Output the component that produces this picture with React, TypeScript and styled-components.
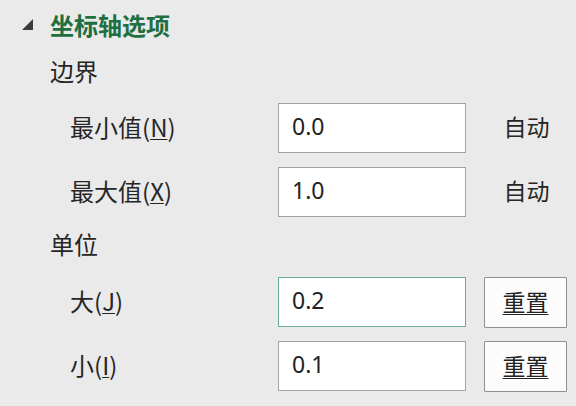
import React from "react";
import styled, { createGlobalStyle } from "styled-components";

const GlobalStyle = createGlobalStyle`
  html, body {
    margin: 0;
    padding: 0;
    background: #eaeaea;
  }
  body {
    font-family: "Noto Sans CJK SC", "Noto Sans", sans-serif;
    color: #262626;
  }
`;

// 面板
const Pane = styled.div`
  width: 576px;
  height: 406px;
  padding-left: 22px;
  box-sizing: border-box;
  background: #eaeaea;
  overflow: hidden;
`;

const Header = styled.div`
  display: flex;
  align-items: center;
  gap: 17px;
  height: 50px;
`;

const Caret = styled.svg`
  width: 11px;
  height: 11px;
  flex-shrink: 0;
  margin-top: -2px;
`;

const HeaderTitle = styled.h2`
  margin: 0;
  font-size: 24px;
  font-weight: 700;
  line-height: 1;
  color: #1e7042;
`;

const Sections = styled.div`
  display: flex;
  flex-direction: column;
  gap: 6px;
  padding-left: 28px;
`;

const Section = styled.section`
  display: flex;
  flex-direction: column;
`;

const SectionTitle = styled.div`
  display: flex;
  align-items: center;
  height: 42px;
  font-size: 24px;
  line-height: 1;
`;

const Fields = styled.div`
  display: flex;
  flex-direction: column;
  gap: 14px;
  margin-top: 11px;
  padding-left: 20px;
`;

const Field = styled.div`
  display: grid;
  grid-template-columns: 190px 188px 83px;
  column-gap: 18px;
  align-items: center;
  height: 50px;
`;

const Label = styled.label`
  font-size: 24px;
  line-height: 1;
  margin-top: -3px;

  u {
    text-underline-offset: 2px;
    text-decoration-thickness: 1px;
  }
`;

const Input = styled.div<{ $focused?: boolean }>`
  box-sizing: border-box;
  height: 50px;
  display: flex;
  align-items: center;
  padding: 0 0 5px 13px;
  background: #ffffff;
  border: 1px solid ${({ $focused }) => ($focused ? "#6aab93" : "#a3a3a3")};
  font-family: "Noto Sans", "Noto Sans CJK SC", sans-serif;
  font-size: 23px;
  color: #222;
`;

const AutoText = styled.span`
  justify-self: center;
  font-size: 23px;
  line-height: 1;
  margin: -3px -2px 0 0;
`;

const ResetButton = styled.button`
  box-sizing: border-box;
  height: 51px;
  width: 83px;
  margin-top: 1px;
  display: flex;
  align-items: center;
  justify-content: center;
  background: #fcfcfc;
  border: 1px solid #8f8f8f;
  border-radius: 1px;
  font-family: "Noto Sans CJK SC", sans-serif;
  font-size: 23px;
  color: #222;
  text-decoration: underline;
  text-decoration-thickness: 1px;
  text-underline-offset: 3px;
  padding: 0 0 4px;
`;

type FieldDef = {
  label: string;
  key: string;
  value: string;
  trailing: "auto" | "reset";
  focused?: boolean;
};

const bounds: FieldDef[] = [
  { label: "最小值", key: "N", value: "0.0", trailing: "auto" },
  { label: "最大值", key: "X", value: "1.0", trailing: "auto" },
];

const units: FieldDef[] = [
  { label: "大", key: "J", value: "0.2", trailing: "reset", focused: true },
  { label: "小", key: "I", value: "0.1", trailing: "reset" },
];

function FieldRow({ f }: { f: FieldDef }) {
  return (
    <Field>
      <Label>
        {f.label}(<u>{f.key}</u>)
      </Label>
      <Input $focused={f.focused}>{f.value}</Input>
      {f.trailing === "auto" ? <AutoText>自动</AutoText> : <ResetButton>重置</ResetButton>}
    </Field>
  );
}

export default function App() {
  return (
    <>
      <GlobalStyle />
      <Pane>
        <Header>
          <Caret viewBox="0 0 11 11">
            <polygon points="11,0 11,11 0,11" fill="#3c3c3c" />
          </Caret>
          <HeaderTitle>坐标轴选项</HeaderTitle>
        </Header>
        <Sections>
          <Section>
            <SectionTitle>边界</SectionTitle>
            <Fields>
              {bounds.map((f) => (
                <FieldRow key={f.key} f={f} />
              ))}
            </Fields>
          </Section>
          <Section>
            <SectionTitle>单位</SectionTitle>
            <Fields>
              {units.map((f) => (
                <FieldRow key={f.key} f={f} />
              ))}
            </Fields>
          </Section>
        </Sections>
      </Pane>
    </>
  );
}
